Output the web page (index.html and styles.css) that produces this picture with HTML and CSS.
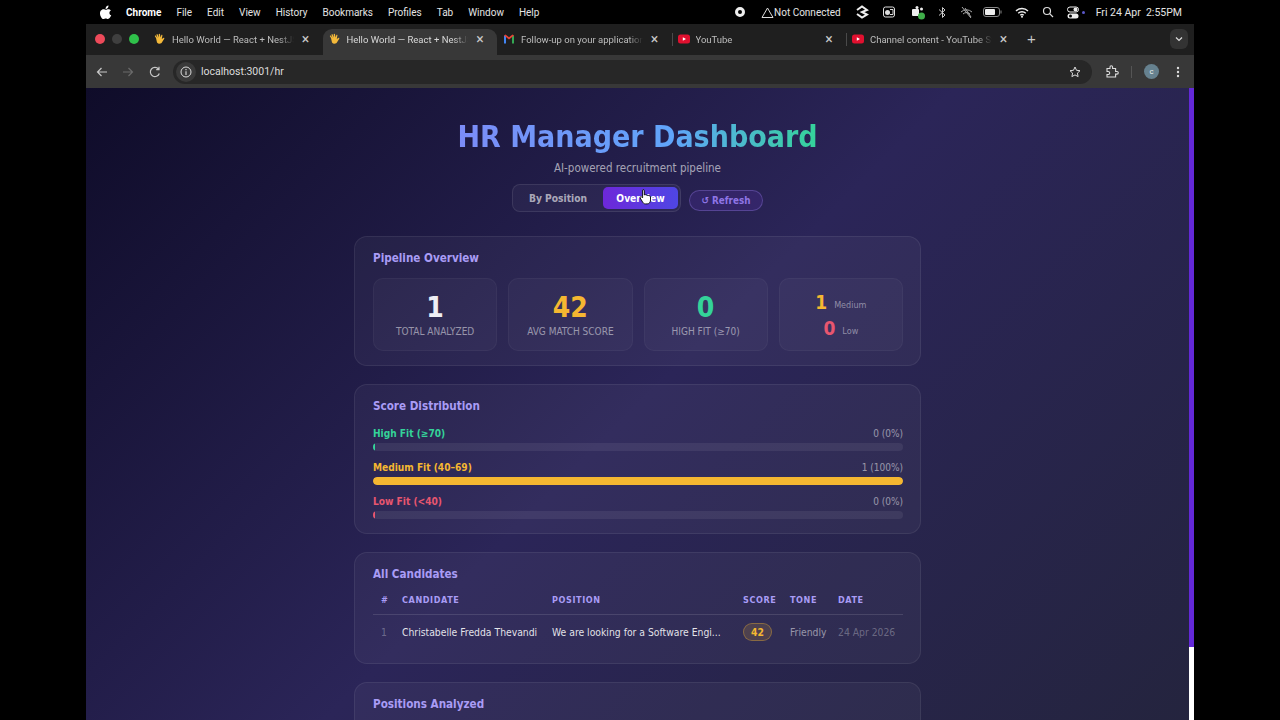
FILE: index.html
```html
<!DOCTYPE html>
<html lang="en">
<head>
    <meta charset="UTF-8">
    <meta name="viewport" content="width=device-width, initial-scale=1.0">
    <title>HR Manager Dashboard</title>
    <link rel="stylesheet" href="styles.css">
</head>
<body>
    <div class="screen">
        <div class="menubar">
            <svg class="apple" width="12" height="14" viewBox="0 0 24 28"><path fill="#fff" d="M17 1c.2 2-.6 3.600-1.600 4.800-1.100 1.300-2.700 2.200-4.300 2-.2-1.800.7-3.600 1.600-4.600C13.800 2 15.500 1.100 17 1zM22.500 20.500c-.8 1.800-1.200 2.600-2.200 4.100-1.400 2.100-3 3.400-4.600 3.400-1.500 0-2.400-1-4.300-1-1.900 0-2.900 1-4.400 1-1.700 0-3.100-1.200-4.400-3.200C-.500 20.600-.800 14.800 1.300 11.700 2.800 9.500 5 8.300 7 8.300c2 0 3.300 1.100 4.900 1.100 1.600 0 2.600-1.100 4.900-1.100 1.800 0 3.700 1 5 2.700-4.400 2.400-3.700 8.700.7 9.500z"/></svg>
            <span class="menu-app">Chrome</span>
            <span>File</span>
            <span>Edit</span>
            <span>View</span>
            <span>History</span>
            <span>Bookmarks</span>
            <span>Profiles</span>
            <span>Tab</span>
            <span>Window</span>
            <span>Help</span>
            <div class="status">
                <svg width="12" height="12" viewBox="0 0 12 12"><circle cx="6" cy="6" r="3.500" fill="none" stroke="#eee" stroke-width="3"/></svg>
                <span class="not-connected"><svg width="13" height="11" viewBox="0 0 13 11"><path d="M6.500 1 12 10.500H1z" fill="none" stroke="#ddd"/></svg>Not Connected</span>
                <svg width="14" height="14" viewBox="0 0 14 14"><path d="M2 5 7 1.500 12 5 7 7 12 9.500 7 12.500 2 9" fill="none" stroke="#eee" stroke-width="2"/></svg>
                <svg width="14" height="14" viewBox="0 0 14 14"><rect x="1.500" y="2" width="11" height="10" rx="2" fill="none" stroke="#ddd"/><circle cx="5.500" cy="7.500" r="2.500" fill="#ddd"/><path d="M8 4.500h3v5H8" fill="none" stroke="#ddd"/></svg>
                <svg class="status-teams" width="14" height="15" viewBox="0 0 14 15"><rect x="1" y="4" width="7" height="7" rx="1" fill="#eee"/><circle cx="6" cy="2.500" r="1.500" fill="#eee"/><circle cx="10.500" cy="4" r="1.500" fill="#eee"/><circle cx="10.500" cy="11" r="3.500" fill="#3fae49"/></svg>
                <svg width="9" height="13" viewBox="0 0 9 13"><path d="M1 3.500 7 9 4.500 11.500v-10L7 4 1 9.500" fill="none" stroke="#ccc"/></svg>
                <svg width="13" height="13" viewBox="0 0 13 13"><path d="M1 6a8 8 0 0 1 11 0M3 8a5 5 0 0 1 7 0M2 1l9 11M5 2l6 9" fill="none" stroke="#aaa"/></svg>
                <svg class="status-battery" width="19" height="10" viewBox="0 0 19 10"><rect x=".5" y=".5" width="16" height="9" rx="2.500" fill="none" stroke="#888"/><rect x="2" y="2" width="10" height="6" rx="1" fill="#eee"/><rect x="17.500" y="3.500" width="1" height="3" fill="#888"/></svg>
                <svg width="14" height="11" viewBox="0 0 14 11"><path d="M1 4a8.500 8.500 0 0 1 12 0M3.200 6.300a5.500 5.500 0 0 1 7.600 0M5.300 8.300a2.500 2.500 0 0 1 3.400 0" fill="none" stroke="#eee" stroke-width="1.400"/><circle cx="7" cy="9.800" r="1" fill="#eee"/></svg>
                <svg width="12" height="12" viewBox="0 0 12 12"><circle cx="5" cy="5" r="3.500" fill="none" stroke="#ddd" stroke-width="1.200"/><path d="M7.600 7.600 11 11" stroke="#ddd" stroke-width="1.200"/></svg>
                <span class="control"><svg width="12" height="13" viewBox="0 0 12 13"><rect x=".5" y="1" width="11" height="5" rx="2.500" fill="none" stroke="#eee"/><circle cx="8.500" cy="3.500" r="2" fill="#eee"/><rect x=".5" y="7.500" width="11" height="5" rx="2.500" fill="#eee"/><circle cx="3.500" cy="10" r="1.500" fill="#000"/></svg><i class="control-dot"></i></span>
                <span class="clock">Fri 24 Apr&nbsp; 2:55PM</span>
            </div>
        </div>

        <div class="tabstrip">
            <div class="lights">
                <i class="light red"></i>
                <i class="light grey"></i>
                <i class="light green"></i>
            </div>
            <div class="tab">
                <svg class="favicon" width="12" height="12" viewBox="0 0 12 12"><use href="#wave"/></svg>
                <span class="tab-title">Hello World — React + NestJS</span>
                <span class="tab-close">×</span>
            </div>
            <div class="tab active">
                <svg class="favicon" width="12" height="12" viewBox="0 0 12 12"><use href="#wave"/></svg>
                <span class="tab-title">Hello World — React + NestJS</span>
                <span class="tab-close">×</span>
            </div>
            <div class="tab">
                <svg class="favicon" width="12" height="12" viewBox="0 0 12 12"><path d="M1 10.500V2.500l2 .5v7.500z" fill="#4285f4"/><path d="M9 10.500V3l2-.5v8z" fill="#34a853"/><path d="M1 2.500 6 6.500 11 2.500 9.500 1.500 6 4.200 2.500 1.500z" fill="#ea4335"/></svg>
                <span class="tab-title">Follow-up on your application</span>
                <span class="tab-close">×</span>
            </div>
            <div class="tab divided">
                <svg class="favicon" width="12" height="12" viewBox="0 0 12 12"><use href="#yt"/></svg>
                <span class="tab-title">YouTube</span>
                <span class="tab-close">×</span>
            </div>
            <div class="tab divided">
                <svg class="favicon" width="12" height="12" viewBox="0 0 12 12"><use href="#yt"/></svg>
                <span class="tab-title">Channel content - YouTube Studio</span>
                <span class="tab-close">×</span>
            </div>
            <span class="new-tab">+</span>
            <span class="tab-menu"><svg width="8" height="6" viewBox="0 0 8 6"><path d="M1 1.500 4 4.500 7 1.500" fill="none" stroke="#ddd" stroke-width="1.200"/></svg></span>
        </div>

        <div class="toolbar">
            <svg class="nav-icon" width="12" height="12" viewBox="0 0 12 12"><path d="M11 6H1.500M5.500 2 1.500 6l4 4" fill="none" stroke="#c8c8c8" stroke-width="1.200"/></svg>
            <svg class="nav-icon" width="12" height="12" viewBox="0 0 12 12"><path d="M1 6h9.500M6.500 2l4 4-4 4" fill="none" stroke="#6a6a6a" stroke-width="1.200"/></svg>
            <svg class="nav-icon reload" width="12" height="12" viewBox="0 0 12 12"><path d="M10.300 7.500A4.600 4.600 0 1 1 9.500 3M10 .8V3.600H7.200" fill="none" stroke="#c8c8c8" stroke-width="1.200"/></svg>
            <div class="omnibox">
                <span class="site-info"><svg width="12" height="12" viewBox="0 0 12 12"><circle cx="6" cy="6" r="5" fill="none" stroke="#ddd"/><path d="M6 5.300V9M6 3v1.200" stroke="#ddd" stroke-width="1.100"/></svg></span>
                <span class="url">localhost:3001/hr</span>
                <svg class="star" width="12" height="12" viewBox="0 0 12 12"><path d="M6 1l1.500 3.300 3.500.4-2.600 2.400.7 3.500L6 8.900l-3.100 1.700.7-3.500L1 4.700l3.500-.4z" fill="none" stroke="#ddd"/></svg>
            </div>
            <svg class="ext" width="14" height="14" viewBox="0 0 14 14"><path d="M2 3.500h3V2a1.300 1.300 0 0 1 2.600 0v1.500h3v3H12a1.300 1.300 0 0 1 0 2.600h-1.400V12H2V9.500h1.200a1.500 1.500 0 0 0 0-3H2z" fill="none" stroke="#ddd" stroke-width="1.100"/></svg>
            <i class="toolbar-sep"></i>
            <span class="avatar">c</span>
            <svg class="kebab" width="4" height="12" viewBox="0 0 4 12"><circle cx="2" cy="2" r="1.200" fill="#ddd"/><circle cx="2" cy="6" r="1.200" fill="#ddd"/><circle cx="2" cy="10" r="1.200" fill="#ddd"/></svg>
        </div>

        <div class="viewport">
            <div class="page">
                <h1 class="title">HR Manager Dashboard</h1>
                <p class="subtitle">AI-powered recruitment pipeline</p>
                <div class="controls">
                    <div class="switch">
                        <button class="switch-btn">By Position</button>
                        <button class="switch-btn on">Overview</button>
                    </div>
                    <button class="refresh">↺ Refresh</button>
                </div>

                <section class="card">
                    <h2>Pipeline Overview</h2>
                    <div class="stats">
                        <div class="stat">
                            <div class="stat-num white">1</div>
                            <div class="stat-label">TOTAL ANALYZED</div>
                        </div>
                        <div class="stat">
                            <div class="stat-num amber">42</div>
                            <div class="stat-label">AVG MATCH SCORE</div>
                        </div>
                        <div class="stat">
                            <div class="stat-num green">0</div>
                            <div class="stat-label">HIGH FIT (≥70)</div>
                        </div>
                        <div class="stat split">
                            <div class="split-row"><span class="split-num amber">1</span><span class="split-label">Medium</span></div>
                            <div class="split-row"><span class="split-num red">0</span><span class="split-label">Low</span></div>
                        </div>
                    </div>
                </section>

                <section class="card">
                    <h2>Score Distribution</h2>
                    <div class="dist">
                        <div class="dist-head"><span class="dist-name green">High Fit (≥70)</span><span class="dist-count">0 (0%)</span></div>
                        <div class="track"><div class="fill bg-green" style="width: 0%"></div></div>
                    </div>
                    <div class="dist">
                        <div class="dist-head"><span class="dist-name amber">Medium Fit (40–69)</span><span class="dist-count">1 (100%)</span></div>
                        <div class="track"><div class="fill bg-amber" style="width: 100%"></div></div>
                    </div>
                    <div class="dist">
                        <div class="dist-head"><span class="dist-name red">Low Fit (&lt;40)</span><span class="dist-count">0 (0%)</span></div>
                        <div class="track"><div class="fill bg-red" style="width: 0%"></div></div>
                    </div>
                </section>

                <section class="card">
                    <h2>All Candidates</h2>
                    <div class="row head">
                        <span class="col-num">#</span>
                        <span>CANDIDATE</span>
                        <span>POSITION</span>
                        <span>SCORE</span>
                        <span>TONE</span>
                        <span>DATE</span>
                    </div>
                    <div class="row body">
                        <span class="col-num muted">1</span>
                        <span class="name">Christabelle Fredda Thevandi</span>
                        <span class="name">We are looking for a Software Engi...</span>
                        <span><b class="badge">42</b></span>
                        <span class="tone">Friendly</span>
                        <span class="muted">24 Apr 2026</span>
                    </div>
                </section>

                <section class="card">
                    <h2>Positions Analyzed</h2>
                </section>
            </div>
            <div class="scrollbar"><div class="thumb"></div></div>
            <svg class="cursor" width="14" height="17" viewBox="0 0 14 17"><path d="M4 1.500c.8 0 1.300.5 1.300 1.300V7l.5-.3c.6-.2 1 0 1.300.4.600-.3 1.100-.1 1.400.4.600-.3 1.200-.1 1.500.4.800-.3 1.500.1 1.500 1v3c0 2-1 4-3.300 4H6.500c-1.200 0-2-.5-2.700-1.500L1.200 10c-.5-.8.500-1.800 1.500-1.100l.9.900V2.800c0-.8 0-1.300.4-1.300z" fill="#fff" stroke="#000" stroke-width=".9"/></svg>
        </div>
    </div>

    <svg width="0" height="0" class="defs">
        <symbol id="wave" viewBox="0 0 12 12"><path d="M2 5 1 3.500c-.5-.8.500-1.300 1-.7L3.500 5 2.500 2c-.3-.8.800-1.200 1.200-.4L5 4.500 4.700 1.300c0-.9 1.200-.9 1.300 0L6.500 4.500 7.300 2.200c.3-.8 1.300-.4 1.100.4L7.800 6l1.500-1c.8-.5 1.400.3.800 1L8.500 8.500C7.500 11 4.500 11.500 3 9.500z" fill="#f4b93a"/></symbol>
        <symbol id="yt" viewBox="0 0 12 12"><rect y="1.500" width="12" height="9" rx="2.500" fill="#e0102f"/><path d="M4.800 4.200 8 6 4.800 7.800z" fill="#fff"/></symbol>
    </svg>
</body>
</html>
```

FILE: styles.css
```css
html, body {
    margin: 0;
    padding: 0;
    height: 100%;
    background: #000;
    overflow: hidden;
}
body {
    font-family: "Liberation Sans", Arial, sans-serif;
}
h1, h2, p {
    margin: 0;
}
button {
    font-family: inherit;
    border: none;
    cursor: pointer;
}
.defs {
    position: absolute;
}
.screen {
    width: 1108px;
    height: 720px;
    margin: 0 auto;
    display: flex;
    flex-direction: column;
}

/* Mac menu bar */
.menubar {
    height: 24px;
    flex: none;
    display: flex;
    align-items: center;
    gap: 15px;
    padding: 0 12px 0 14px;
    color: #e4e4e4;
    font-family: Roboto, sans-serif;
    font-size: 10px;
}
.apple {
    margin-right: -1px;
}
.menu-app {
    color: #fff;
    font-weight: 700;
}
.status {
    margin-left: auto;
    display: flex;
    align-items: center;
    gap: 13px;
}
.status-teams {
    margin-left: 2px;
}
.status-battery {
    margin-left: -3px;
}
.not-connected {
    display: flex;
    align-items: center;
    gap: 0;
    margin: 0 1px 0 2px;
}
.control {
    display: flex;
    align-items: center;
    gap: 3px;
    margin-right: -2px;
}
.control-dot {
    width: 3px;
    height: 3px;
    border-radius: 50%;
    background: #5b57c9;
}
.clock {
    white-space: nowrap;
    font-size: 10.500px;
}

/* Chrome tabs */
.tabstrip {
    height: 31px;
    flex: none;
    display: flex;
    align-items: flex-end;
    background: #1f1f1f;
    position: relative;
}
.lights {
    width: 62px;
    height: 26px;
    flex: none;
    display: flex;
    align-items: center;
    gap: 7px;
    padding: 0 0 6px 9px;
    box-sizing: border-box;
}
.light {
    width: 10px;
    height: 10px;
    border-radius: 50%;
}
.light.red {
    background: #ed4a5a;
}
.light.grey {
    background: #3f3f3f;
}
.light.green {
    background: #2fc04a;
}
.tab {
    width: 174.500px;
    height: 26px;
    flex: none;
    display: flex;
    align-items: center;
    box-sizing: border-box;
    padding: 0 9px 6px 6px;
    color: #bdbdbd;
    font-family: Roboto, sans-serif;
    font-size: 9.500px;
    position: relative;
}
.tab.active {
    background: #383838;
    border-radius: 9px 9px 0 0;
    color: #d8d8d8;
}
.tab.divided::before {
    content: "";
    position: absolute;
    left: 0;
    top: 4px;
    height: 13px;
    width: 1px;
    background: #4a4a4a;
}
.favicon {
    flex: none;
    margin-right: 6px;
}
.tab-title {
    flex: 1;
    overflow: hidden;
    white-space: nowrap;
    -webkit-mask-image: linear-gradient(90deg, #000 88%, transparent);
    mask-image: linear-gradient(90deg, #000 88%, transparent);
}
.tab-close {
    flex: none;
    width: 16px;
    margin-left: 4px;
    text-align: center;
    font-size: 14px;
    color: #c8c8c8;
}
.new-tab {
    height: 26px;
    line-height: 20px;
    margin-left: 3px;
    width: 16px;
    text-align: center;
    color: #c8c8c8;
    font-size: 15px;
}
.tab-menu {
    position: absolute;
    right: 6px;
    top: 5px;
    width: 18px;
    height: 20px;
    border-radius: 6px;
    background: #333;
    display: flex;
    align-items: center;
    justify-content: center;
}

/* Chrome toolbar */
.toolbar {
    height: 33px;
    flex: none;
    display: flex;
    align-items: center;
    background: #383838;
    padding: 0 14px 0 10px;
    box-sizing: border-box;
}
.nav-icon {
    margin-right: 14px;
}
.reload {
    margin-left: 1px;
}
.omnibox {
    flex: none;
    width: 919px;
    height: 24px;
    margin-left: -2px;
    border-radius: 12px;
    background: #272727;
    display: flex;
    align-items: center;
    box-sizing: border-box;
    padding: 0 11px 0 3px;
}
.site-info {
    width: 20px;
    height: 20px;
    border-radius: 50%;
    background: #3a3a3a;
    display: flex;
    align-items: center;
    justify-content: center;
}
.url {
    margin-left: 5px;
    color: #dcdcdc;
    font-family: Roboto, sans-serif;
    font-size: 10.500px;
}
.star {
    margin-left: auto;
}
.ext {
    margin-left: 13px;
}
.toolbar-sep {
    width: 1px;
    height: 12px;
    background: #555;
    margin: 0 12px 0 12px;
}
.avatar {
    width: 15px;
    height: 15px;
    border-radius: 50%;
    background: #66818f;
    color: #e8eef0;
    font-size: 8px;
    line-height: 15px;
    text-align: center;
}
.kebab {
    margin-left: 17px;
}

/* Page inside the browser */
.viewport {
    flex: 1;
    min-height: 0;
    display: flex;
    position: relative;
    overflow: hidden;
    background: linear-gradient(135deg, #0f0c29, #2b2558 50%, #24243e);
    font-family: "DejaVu Sans Condensed", "DejaVu Sans", sans-serif;
}
.page {
    flex: 1;
    min-width: 0;
    display: flex;
    flex-direction: column;
    align-items: center;
    padding-top: 31px;
}
.scrollbar {
    width: 5px;
    flex: none;
    background: #fff;
}
.thumb {
    height: 559px;
    background: #6328d8;
}
.cursor {
    position: absolute;
    left: 553px;
    top: 100px;
}
.title {
    font-size: 30px;
    line-height: 36px;
    font-weight: 700;
    background: linear-gradient(90deg, #7c8cf8, #60a5fa 60%, #34d399);
    -webkit-background-clip: text;
    background-clip: text;
    color: transparent;
}
.subtitle {
    margin-top: 5px;
    font-size: 11.500px;
    line-height: 16px;
    color: rgba(255, 255, 255, 0.6);
}
.controls {
    margin-top: 8px;
    display: flex;
    align-items: flex-end;
    gap: 8px;
}
.switch {
    display: flex;
    align-items: center;
    gap: 0;
    height: 28px;
    box-sizing: border-box;
    padding: 0 2px 0 3px;
    border-radius: 8px;
    border: 1px solid rgba(255, 255, 255, 0.09);
    background: rgba(255, 255, 255, 0.04);
}
.switch-btn {
    width: 84px;
    height: 22px;
    padding: 0;
    border-radius: 5px;
    background: none;
    color: rgba(255, 255, 255, 0.62);
    font-size: 10.200px;
    font-weight: 700;
}
.switch-btn.on {
    width: 75px;
    margin-left: 3px;
    background: linear-gradient(90deg, #6d28d9, #4f46e5);
    color: #fff;
}
.refresh {
    width: 74px;
    height: 21px;
    padding: 0;
    margin-bottom: 1px;
    border-radius: 11px;
    border: 1px solid rgba(167, 139, 250, 0.3);
    background: rgba(124, 58, 237, 0.15);
    color: #8f75e6;
    font-size: 9.800px;
    font-weight: 700;
}

/* Cards */
.card {
    width: 567px;
    flex: none;
    box-sizing: border-box;
    margin-top: 18px;
    padding: 14px 17px 0 18px;
    border-radius: 13px;
    border: 1px solid rgba(255, 255, 255, 0.07);
    background: rgba(255, 255, 255, 0.04);
}
.controls + .card {
    margin-top: 24px;
}
.card:nth-of-type(1) {
    height: 130px;
}
.card:nth-of-type(2) {
    height: 150px;
}
.card:nth-of-type(3) {
    height: 112px;
}
.card:nth-of-type(4) {
    height: 120px;
}
.card h2 {
    font-size: 11.600px;
    line-height: 15px;
    font-weight: 700;
    color: #a99cf5;
}
.stats {
    margin-top: 12px;
    display: grid;
    grid-template-columns: repeat(4, 1fr);
    gap: 11px;
}
.stat {
    height: 73px;
    box-sizing: border-box;
    padding-top: 14px;
    text-align: center;
    border-radius: 10px;
    border: 1px solid rgba(255, 255, 255, 0.04);
    background: rgba(255, 255, 255, 0.03);
}
.stat-num {
    font-size: 28px;
    line-height: 30px;
    font-weight: 700;
}
.stat-label {
    margin-top: 2px;
    font-size: 10px;
    line-height: 13px;
    color: rgba(255, 255, 255, 0.5);
}
.stat.split {
    padding-top: 10px;
}
.split-row {
    height: 26px;
    display: flex;
    align-items: center;
    justify-content: center;
    gap: 7px;
}
.split-num {
    font-size: 19px;
    font-weight: 700;
}
.split-label {
    margin-top: 5px;
    font-size: 9px;
    color: rgba(255, 255, 255, 0.45);
}
.white {
    color: #eeeef4;
}
.amber {
    color: #f5b731;
}
.green {
    color: #34d399;
}
.red {
    color: #e8566f;
}
.bg-amber {
    background: #f5b731;
}
.bg-green {
    background: #34d399;
}
.bg-red {
    background: #e8566f;
}

/* Score bars */
.dist {
    margin-top: 9px;
}
h2 + .dist {
    margin-top: 12px;
}
.dist-head {
    display: flex;
    justify-content: space-between;
    align-items: center;
    height: 14px;
    margin-bottom: 3px;
}
.dist-name {
    font-size: 10.100px;
    font-weight: 700;
}
.dist-count {
    font-size: 10px;
    color: rgba(255, 255, 255, 0.5);
}
.track {
    height: 8px;
    border-radius: 4px;
    overflow: hidden;
    background: rgba(255, 255, 255, 0.07);
}
.fill {
    height: 100%;
    min-width: 2px;
    border-radius: 4px;
}

/* Candidates table */
.row {
    display: grid;
    grid-template-columns: 29px 150px 191px 47px 48px 1fr;
    align-items: center;
}
.row.head {
    height: 29px;
    margin-top: 4px;
    box-sizing: border-box;
    border-bottom: 1px solid rgba(255, 255, 255, 0.12);
    font-size: 9px;
    font-weight: 700;
    letter-spacing: 0.6px;
    color: #a99cf5;
}
.row.body {
    height: 34px;
    font-size: 10.300px;
}
.col-num {
    padding-left: 8px;
}
.name {
    color: rgba(255, 255, 255, 0.88);
    white-space: nowrap;
}
.muted {
    color: rgba(255, 255, 255, 0.3);
}
.tone {
    color: rgba(255, 255, 255, 0.5);
}
.badge {
    display: inline-block;
    width: 29px;
    height: 18px;
    line-height: 16px;
    box-sizing: border-box;
    text-align: center;
    border-radius: 9px;
    border: 1px solid rgba(245, 183, 49, 0.35);
    background: rgba(245, 183, 49, 0.15);
    color: #f5b731;
    font-size: 10.300px;
}
```
